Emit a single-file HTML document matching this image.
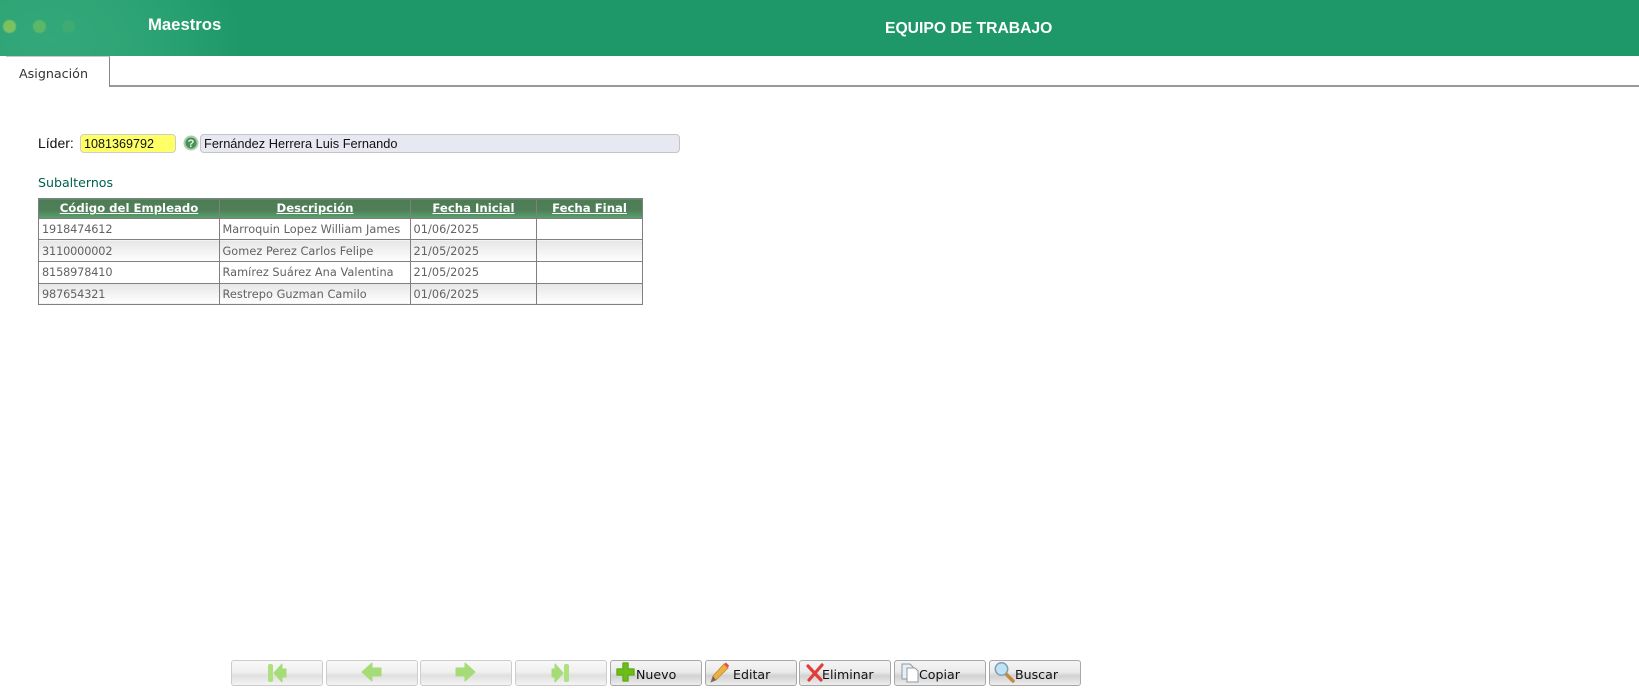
<!DOCTYPE html>
<html lang="es"><head><meta charset="utf-8"><title>Equipo de trabajo</title>
<style>
html,body{margin:0;padding:0;background:#fff;width:1639px;height:700px;overflow:hidden}
body{position:relative;font-family:"Liberation Sans",sans-serif}
.a{position:absolute;white-space:nowrap}
#hdr{left:0;top:0;width:1639px;height:56px;background:radial-gradient(ellipse 190px 130px at 50px 40px,#33a87a 0%,#2fa576 40%,#27a070 70%,#1f9869 100%)}
.dot{position:absolute;top:20px;width:12.5px;height:12.5px;border-radius:50%;filter:blur(.5px)}
#tabline{left:110px;top:85px;width:1529px;height:2px;background:#999}
#tab{left:6px;top:56px;width:103px;height:30px;background:#fff;border-top:1px solid #c8c8c8;border-right:1.5px solid #888}
table{position:absolute;left:38px;top:198px;border-collapse:collapse;table-layout:fixed;width:604px;font-family:"DejaVu Sans",sans-serif;font-size:11.3px}
th,td{border:1px solid #808080;padding:0 0 0 3px;overflow:hidden;white-space:nowrap}
th{height:18.5px;padding:0;color:#fff;text-decoration:underline;font-weight:bold;text-align:center;background:linear-gradient(#4d7c55 0%,#4f7e57 55%,#5aa26f 100%);font-size:11.7px}
td{height:19.7px;color:#626262;background:#fff;padding-top:1px;vertical-align:middle}
td.n{letter-spacing:-.15px;padding-left:3px}
td.d{padding-left:2.5px;letter-spacing:.05px}
tr.g td{background:linear-gradient(#e6e6e6,#fff)}
.b{position:absolute;top:660px;width:92px;height:26px;box-sizing:border-box;border:1px solid #ccc;border-radius:3px;background:linear-gradient(#f8f8f8 0%,#f0f0f0 45%,#e0e0e0 60%,#f4f4f4 100%)}
.b.on{border-color:#a8a8a8;background:linear-gradient(#f5f5f5 0%,#ebebeb 45%,#d2d2d2 62%,#eeeeee 100%)}
.b span{position:absolute;top:5px;line-height:17px;color:#111;font-family:"DejaVu Sans",sans-serif;font-size:12.6px}
.b svg{position:absolute;left:0;top:0}
</style></head><body>
<div class="a" id="hdr">
<div class="dot" style="left:3px;background:#7cc15f"></div>
<div class="dot" style="left:33px;background:#5cb768"></div>
<div class="dot" style="left:62px;background:#3dab72"></div>
</div>
<div class="a" style="left:148px;top:15px;color:#fff;font-weight:bold;font-size:16.7px;line-height:20px">Maestros</div>
<div class="a" style="left:885px;top:19px;color:#fff;font-weight:bold;font-size:15.7px;line-height:20px">EQUIPO DE TRABAJO</div>
<div class="a" id="tabline"></div>
<div class="a" id="tab"></div>
<div class="a" style="left:19px;top:65px;font-family:'DejaVu Sans',sans-serif;font-size:12.7px;line-height:18px;color:#333">Asignación</div>

<div class="a" style="left:38px;top:134px;font-size:14px;line-height:18px;color:#111">Líder:</div>
<div class="a" style="left:80px;top:134px;width:96px;height:19px;box-sizing:border-box;background:#ffff66;border:1px solid #ccc;border-radius:4px;font-size:12.6px;line-height:18px;padding-left:3px;color:#111">1081369792</div>
<svg class="a" style="left:183px;top:134px" width="16" height="18" viewBox="0 0 16 18"><circle cx="8" cy="9" r="7.5" fill="#a9cfa9"/><circle cx="8" cy="9" r="5.5" fill="#4a8f58"/><text x="8" y="13" font-family="Liberation Sans" font-size="11" font-weight="bold" text-anchor="middle" fill="#e8f5e8">?</text></svg>
<div class="a" style="left:200px;top:134px;width:480px;height:19px;box-sizing:border-box;background:#e8e8f2;border:1px solid #c4c4c4;border-radius:4px;font-size:12.8px;line-height:17px;padding-left:3px;color:#111">Fernández Herrera Luis Fernando</div>

<div class="a" style="left:38px;top:174px;font-family:'DejaVu Sans',sans-serif;font-size:12.6px;line-height:18px;color:#00614a">Subalternos</div>

<table>
<colgroup><col style="width:181px"><col style="width:191px"><col style="width:126px"><col style="width:106px"></colgroup>
<tr><th>Código del Empleado</th><th>Descripción</th><th>Fecha Inicial</th><th>Fecha Final</th></tr>
<tr><td class="n">1918474612</td><td class="d">Marroquin Lopez William James</td><td class="d">01/06/2025</td><td></td></tr>
<tr class="g"><td class="n">3110000002</td><td class="d">Gomez Perez Carlos Felipe</td><td class="d">21/05/2025</td><td></td></tr>
<tr><td class="n">8158978410</td><td class="d">Ramírez Suárez Ana Valentina</td><td class="d">21/05/2025</td><td></td></tr>
<tr class="g"><td class="n">987654321</td><td class="d">Restrepo Guzman Camilo</td><td class="d">01/06/2025</td><td></td></tr>
</table>

<div class="b" style="left:231px"><svg width="90" height="24"><rect x="36" y="3" width="5" height="18" rx="2" fill="#aee07f"/><path d="M42 12l8-9v5h4v8h-4v5z" fill="#a6dc76" stroke="#a6dc76" stroke-linejoin="round"/></svg></div>
<div class="b" style="left:326px"><svg width="90" height="24"><path d="M35 11l10-9v5h9v8h-9v5z" fill="#a6dc76" stroke="#a6dc76" stroke-linejoin="round"/></svg></div>
<div class="b" style="left:420px"><svg width="90" height="24"><path d="M54 11l-10-9v5h-9v8h9v5z" fill="#a6dc76" stroke="#a6dc76" stroke-linejoin="round"/></svg></div>
<div class="b" style="left:515px"><svg width="90" height="24"><rect x="48" y="3" width="5" height="18" rx="2" fill="#aee07f"/><path d="M47 12l-8-9v5h-3v8h3v5z" fill="#a6dc76" stroke="#a6dc76" stroke-linejoin="round"/></svg></div>

<div class="b on" style="left:610px"><svg width="30" height="24"><path d="M12 2h5v6h6v6h-6v6h-5v-6H6V8h6z" fill="#6cbd1c" stroke="#64b016" stroke-width="1.5" stroke-linejoin="round"/></svg><span style="left:25px">Nuevo</span></div>
<div class="b on" style="left:705px"><svg width="30" height="24"><path d="M5 21l2-6L18 3l4 4L10 19z" fill="#f0b040" stroke="#b98a3a" stroke-width=".8"/><path d="M18 3l2-1.500 3 3L22 7z" fill="#e05050"/><path d="M5 21l2-6 3 4z" fill="#6a6a6a"/></svg><span style="left:27px">Editar</span></div>
<div class="b on" style="left:799px"><svg width="30" height="24"><path d="M8 5l13 14M22 4L9 19" stroke="#e23c3c" stroke-width="3.2" stroke-linecap="round"/></svg><span style="left:22px">Eliminar</span></div>
<div class="b on" style="left:894px"><svg width="30" height="24"><path d="M7 3h8l3 3v12H7z" fill="#e8eef2" stroke="#8b9ba6"/><path d="M12 7h8l3 3v11H12z" fill="#fff" stroke="#8b9ba6"/></svg><span style="left:24px">Copiar</span></div>
<div class="b on" style="left:989px"><svg width="30" height="24"><path d="M16 13l7 7" stroke="#c28a3c" stroke-width="3.5" stroke-linecap="round"/><circle cx="11.5" cy="8" r="6.2" fill="#bfe3f5" stroke="#7f9db5" stroke-width="1.5"/></svg><span style="left:25px">Buscar</span></div>
</body></html>
